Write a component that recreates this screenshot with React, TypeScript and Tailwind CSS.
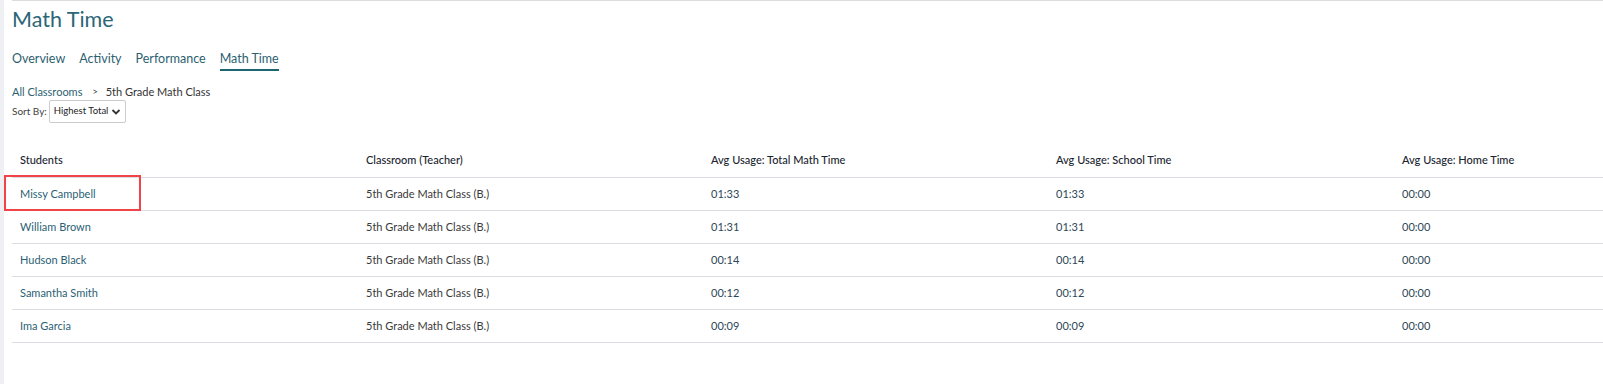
import React from 'react';

const rows = [
  { name: 'Missy Campbell', cls: '5th Grade Math Class (B.)', total: '01:33', school: '01:33', home: '00:00' },
  { name: 'William Brown', cls: '5th Grade Math Class (B.)', total: '01:31', school: '01:31', home: '00:00' },
  { name: 'Hudson Black', cls: '5th Grade Math Class (B.)', total: '00:14', school: '00:14', home: '00:00' },
  { name: 'Samantha Smith', cls: '5th Grade Math Class (B.)', total: '00:12', school: '00:12', home: '00:00' },
  { name: 'Ima Garcia', cls: '5th Grade Math Class (B.)', total: '00:09', school: '00:09', home: '00:00' },
];

const cols = 'grid grid-cols-[346px_345px_345px_346px_1fr]';

const App: React.FC = () => {
  return (
    <div className="relative flex h-[384px] w-full bg-white font-['Lato','Liberation_Sans',sans-serif]">
      <div className="w-[4px] bg-[#eef0f4]" />
      <div className="flex-1 pl-[8px]">
        <div className="border-t border-[#dcdcdc]">
          <h1 className="mt-[4px] text-[21.5px] leading-[28px] text-[#2b6677]">Math Time</h1>

          <nav className="mt-[18px] flex items-end gap-[14px] text-[12.5px] leading-[16px] text-[#2d5f70]">
            <span className="pb-[4px]">Overview</span>
            <span className="pb-[4px]">Activity</span>
            <span className="pb-[4px]">Performance</span>
            <span className="border-b-2 border-[#1b6670] pb-[2px]">Math Time</span>
          </nav>

          <div className="mt-[13px] flex items-center text-[11px] leading-[16px] text-[#333]">
            <span className="text-[#2d5f70]">All Classrooms</span>
            <span className="ml-[10px] mr-[8px] text-[9px]">&gt;</span>
            <span>5th Grade Math Class</span>
          </div>

          <div className="flex items-center whitespace-nowrap text-[9.5px] text-[#444]">
            <span className="text-[10px]">Sort By:</span>
            <div className="ml-[2px] flex h-[23px] w-[77px] items-center justify-between rounded-[2px] border border-[#ccc] pl-[4px] pr-[4px] text-[#222]">
              <span>Highest Total</span>
              <svg width="10" height="10" viewBox="0 0 10 10">
                <path d="M1.5 3 L5 6.5 L8.5 3" fill="none" stroke="#333" strokeWidth="1.8" />
              </svg>
            </div>
          </div>

          <div className="mt-[21px] text-[11px]">
            <div className={`${cols} h-[34px] items-center border-b border-[#dcdde3] font-medium text-[#1a2530]`}>
              <div className="pl-[8px]">Students</div>
              <div className="pl-[8px]">Classroom (Teacher)</div>
              <div className="pl-[8px]">Avg Usage: Total Math Time</div>
              <div className="pl-[8px]">Avg Usage: School Time</div>
              <div className="pl-[8px]">Avg Usage: Home Time</div>
            </div>
            {rows.map((r) => (
              <div key={r.name} className={`${cols} h-[33px] items-center border-b border-[#dcdde3] text-[#3a3a3a]`}>
                <div className="pl-[8px] text-[#2b5f74]">{r.name}</div>
                <div className="pl-[8px]">{r.cls}</div>
                <div className="pl-[8px] text-[#2e4756]">{r.total}</div>
                <div className="pl-[8px] text-[#2e4756]">{r.school}</div>
                <div className="pl-[8px] text-[#2e4756]">{r.home}</div>
              </div>
            ))}
          </div>
        </div>
      </div>

      <div className="absolute left-[4px] top-[175px] h-[36px] w-[137px] border-2 border-[#f04448]" />
    </div>
  );
};

export default App;
